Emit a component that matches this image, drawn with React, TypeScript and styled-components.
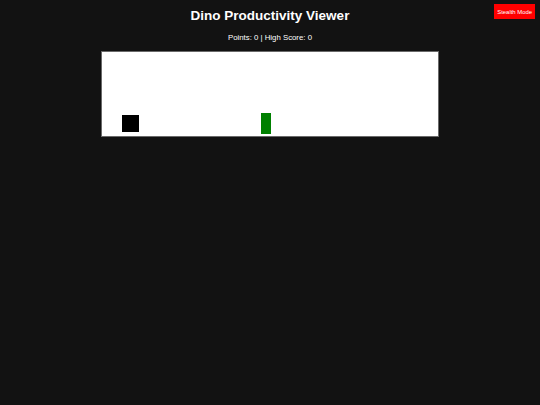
import React, { useState } from "react";
import styled, { createGlobalStyle } from "styled-components";

const GlobalStyle = createGlobalStyle`
  html, body {
    margin: 0;
    padding: 0;
    background: #121212;
    font-family: "Liberation Sans", Arial, sans-serif;
    color: #ffffff;
  }
`;

const Page = styled.div`
  display: flex;
  flex-direction: column;
  align-items: center;
  min-height: 405px;
  padding-top: 8px;
  box-sizing: border-box;
`;

const Title = styled.h1`
  margin: 0;
  font-size: 13.5px;
  line-height: 16px;
  font-weight: bold;
`;

const Score = styled.p`
  margin: 9px 0 0;
  font-size: 7.8px;
  line-height: 9px;
`;

const GameBox = styled.div`
  position: relative;
  margin-top: 9px;
  width: 338px;
  height: 86px;
  box-sizing: border-box;
  border: 1px solid #6a6a6a;
  background: #ffffff;
  overflow: hidden;
`;

const Dino = styled.div`
  position: absolute;
  left: 20px;
  top: 63px;
  width: 17px;
  height: 17px;
  background: #000000;
`;

const Obstacle = styled.div`
  position: absolute;
  top: 61px;
  width: 10px;
  height: 21px;
  background: #008000;
`;

const StealthButton = styled.button`
  position: fixed;
  top: 4px;
  right: 5px;
  height: 15px;
  padding: 0 3px;
  border: none;
  background: #ff0000;
  color: #ffffff;
  font-family: "Liberation Sans", Arial, sans-serif;
  font-size: 5.9px;
  cursor: pointer;
`;

export default function App() {
  const [points] = useState(0);
  const [highScore] = useState(0);
  const obstacleLeft = 159;

  return (
    <>
      <GlobalStyle />
      <Page>
        <Title>Dino Productivity Viewer</Title>
        <Score>
          Points: {points} | High Score: {highScore}
        </Score>
        <GameBox>
          <Dino />
          <Obstacle style={{ left: obstacleLeft }} />
        </GameBox>
      </Page>
      <StealthButton>Stealth Mode</StealthButton>
    </>
  );
}
